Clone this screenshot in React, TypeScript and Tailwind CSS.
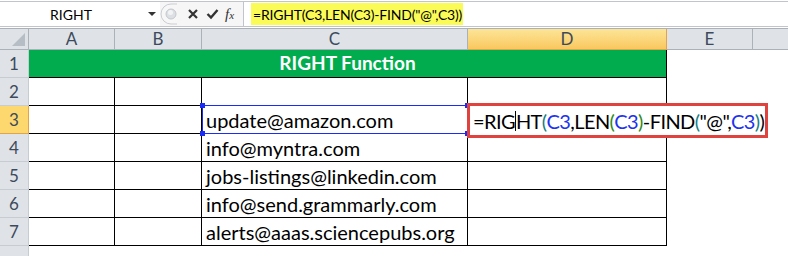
import React from "react"

const cols = [
  { name: "A", w: 86 },
  { name: "B", w: 87 },
  { name: "C", w: 266 },
  { name: "D", w: 199 },
  { name: "E", w: 86 },
  { name: "", w: 90 },
]

const emails = [
  "",
  "update@amazon.com",
  "info@myntra.com",
  "jobs-listings@linkedin.com",
  "info@send.grammarly.com",
  "alerts@aaas.sciencepubs.org",
]

const font = { fontFamily: "Lato, 'Liberation Sans', sans-serif" }

function Grip() {
  return (
    <svg width="18" height="22" viewBox="0 0 18 22">
      <path d="M17 1 H11 A10 10 0 0 0 11 21 H17" fill="#f7f7f7" stroke="#c9cdd2" />
      <circle cx="11" cy="11" r="5" fill="#dcdfe3" stroke="#c3c7cc" />
      <circle cx="10.5" cy="9.5" r="2.5" fill="#f2f3f4" />
    </svg>
  )
}

function FormulaText() {
  const blue = "text-[#1d33f0]"
  return (
    <>
      =RIG<span className="inline-block w-[1px] h-[20px] bg-black align-[-4px]" />HT
      <span className="text-[#177f86]">(</span>
      <span className={blue}>C3</span>,LEN<span className="text-[#2f8a1c]">(</span>
      <span className={blue}>C3</span>
      <span className="text-[#2f8a1c]">)</span>-FIND<span className="text-[#177f86]">(</span>"@",
      <span className={blue}>C3</span>
      <span className="text-[#177f86]">)</span>)
    </>
  )
}

export default function App() {
  return (
    <div className="w-[788px] h-[256px] overflow-hidden bg-white relative" style={font}>
      {/* formula bar */}
      <div className="h-[26px] border-t border-b border-[#c1c5ca] mt-[1px] flex bg-white">
        <div className="w-[160px] flex items-center relative">
          <span className="w-full text-center text-[14px] text-black pr-[18px]">RIGHT</span>
          <span className="absolute left-[148px] top-[10px] w-0 h-0 border-l-[4px] border-r-[4px] border-t-[4px] border-l-transparent border-r-transparent border-t-[#333]" />
        </div>
        <div className="w-[83px] flex items-center bg-[#f6f6f6]">
          <Grip />
          <svg width="12" height="12" viewBox="0 0 12 12" className="ml-[9px]">
            <path d="M2 2 L10 10 M10 2 L2 10" stroke="#333" strokeWidth="2.2" />
          </svg>
          <svg width="13" height="12" viewBox="0 0 13 12" className="ml-[7px]">
            <path d="M1.5 6 L5 9.5 L11.5 2" stroke="#333" strokeWidth="2.4" fill="none" />
          </svg>
          <span className="ml-[6px] text-[15px] italic text-[#333] leading-none" style={{ fontFamily: "'Liberation Serif', serif" }}>
            f<span className="text-[11px]">x</span>
          </span>
        </div>
        <div className="flex-1 flex items-center pl-[7px] border-l border-[#c1c5ca]">
          <span className="bg-[#fbfb57] h-[22px] w-[212px] flex items-center pl-[2px] text-[14px] tracking-[-0.2px] text-black whitespace-nowrap">
            =RIGHT(C3,LEN(C3)-FIND("@",C3))
          </span>
        </div>
      </div>

      {/* gap */}
      <div className="h-[1px] bg-white" />

      {/* column headers */}
      <div className="flex h-[22px] border-t border-[#aab1b9] bg-[#dfe3e8]">
        <div className="w-[29px] shrink-0 border-r border-b border-[#aab1b9] relative">
          <svg className="absolute right-[3px] bottom-[3px]" width="13" height="13" viewBox="0 0 13 13">
            <path d="M13 0 L13 13 L0 13 Z" fill="#b7bdc4" />
          </svg>
        </div>
        {cols.map((c, i) => (
          <div
            key={i}
            className={
              c.name === "D"
                ? "shrink-0 flex items-center justify-center text-[17px] text-[#3d4a5c] border-r border-b border-[#e2a34a] bg-gradient-to-b from-[#fde596] to-[#f9c85e]"
                : "shrink-0 flex items-center justify-center text-[17px] text-[#3d4a5c] border-r border-b border-[#aab1b9]"
            }
            style={{ width: c.w }}
          >
            {c.name}
          </div>
        ))}
      </div>

      {/* rows */}
      <div className="flex">
        <div className="w-[29px] shrink-0">
          {[1, 2, 3, 4, 5, 6, 7, 0].map((r) => (
            <div
              key={r}
              className={
                r === 3
                  ? "h-[28px] flex items-center justify-center text-[17px] text-[#3d4a5c] border-r border-b border-[#e2a34a] bg-[#fcd86e]"
                  : "h-[28px] flex items-center justify-center text-[17px] text-[#3d4a5c] border-r border-b border-[#c6ccd2] bg-[#dfe3e8]"
              }
            >
              {r > 0 ? r : ""}
            </div>
          ))}
        </div>

        <div className="flex flex-col">
          <div className="h-[28px] w-[638px] bg-[#00ac4e] border-r border-b border-black flex items-center justify-center">
            <span className="text-white font-bold text-[19px]">RIGHT Function</span>
          </div>
          {emails.map((e, i) => (
            <div key={i} className="flex h-[28px]">
              <div className="w-[86px] border-r border-b border-black" />
              <div className="w-[87px] border-r border-b border-black" />
              <div className="w-[266px] border-r border-b border-black flex items-center pl-[4px] text-[20px] text-black leading-none">
                {e}
              </div>
              <div className="w-[199px] border-r border-b border-black" />
            </div>
          ))}
        </div>
      </div>

      {/* selected cell C3 */}
      <div className="absolute left-[202px] top-[105px] w-[266px] h-[29px] border border-[#1a2cf5]">
        <span className="absolute -left-[3px] -top-[3px] w-[5px] h-[5px] bg-[#1a2cf5]" />
        <span className="absolute -left-[3px] -bottom-[3px] w-[5px] h-[5px] bg-[#1a2cf5]" />
        <span className="absolute -right-[3px] -top-[3px] w-[5px] h-[5px] bg-[#1a2cf5]" />
        <span className="absolute -right-[3px] -bottom-[3px] w-[5px] h-[5px] bg-[#1a2cf5]" />
      </div>

      {/* edited cell D3 */}
      <div className="absolute left-[467px] top-[103px] w-[301px] h-[35px] border-[3px] border-[#e0433d] bg-white flex items-center pl-[3px] text-[20px] tracking-[-0.6px] text-black leading-none whitespace-nowrap">
        <FormulaText />
      </div>
    </div>
  )
}
